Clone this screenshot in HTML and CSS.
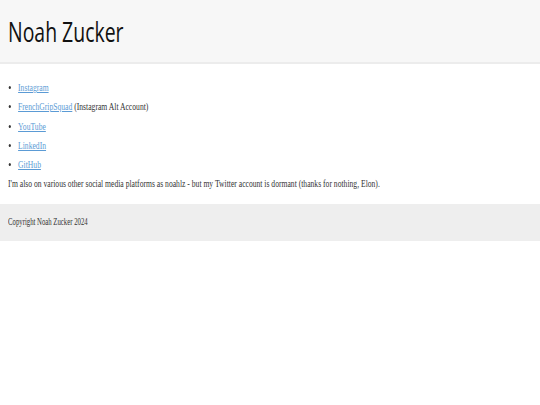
FILE: index.html
```html
<!DOCTYPE html>
<html lang="en">
<head>
  <meta charset="UTF-8">
  <meta name="viewport" content="width=device-width, initial-scale=1.0">
  <title>Noah Zucker</title>
  <link rel="stylesheet" href="styles.css">
</head>
<body>
  <header class="site-header">
    <h1 class="narrow">Noah Zucker</h1>
  </header>

  <main class="content">
    <ul class="links narrow">
      <li><a href="#">Instagram</a></li>
      <li><a href="#">FrenchGripSquad</a> (Instagram Alt Account)</li>
      <li><a href="#">YouTube</a></li>
      <li><a href="#">LinkedIn</a></li>
      <li><a href="#">GitHub</a></li>
    </ul>
    <p class="narrow">I'm also on various other social media platforms as noahlz - but my Twitter account is dormant (thanks for nothing, Elon).</p>
  </main>

  <footer class="site-footer">
    <p class="narrow">Copyright Noah Zucker 2024</p>
  </footer>
</body>
</html>
```

FILE: styles.css
```css
* {
  margin: 0;
  padding: 0;
  box-sizing: border-box;
}

body {
  background: #fff;
  color: #333;
  font-family: 'Liberation Serif', serif;
  overflow: hidden;
}

/* the text on this page is drawn condensed */
.narrow {
  width: fit-content;
  white-space: nowrap;
  transform: scaleX(0.72);
  transform-origin: 0 0;
}

.site-header {
  background: #f7f7f7;
  border-bottom: 2px solid #ececec;
  height: 64px;
  padding: 0 8px;
  display: flex;
  align-items: center;
}

h1 {
  font-family: 'Open Sans', sans-serif;
  font-weight: 400;
  font-size: 27px;
  color: #111;
}

.content {
  padding: 14px 8px 10px;
  font-size: 10.6px;
  line-height: 19.3px;
}

.links {
  padding-left: 14px;
}

.links a {
  color: #5b9bd5;
}

.site-footer {
  background: #eeeeee;
  height: 37px;
  padding: 0 8px;
  display: flex;
  align-items: center;
  font-size: 9.4px;
}
```
